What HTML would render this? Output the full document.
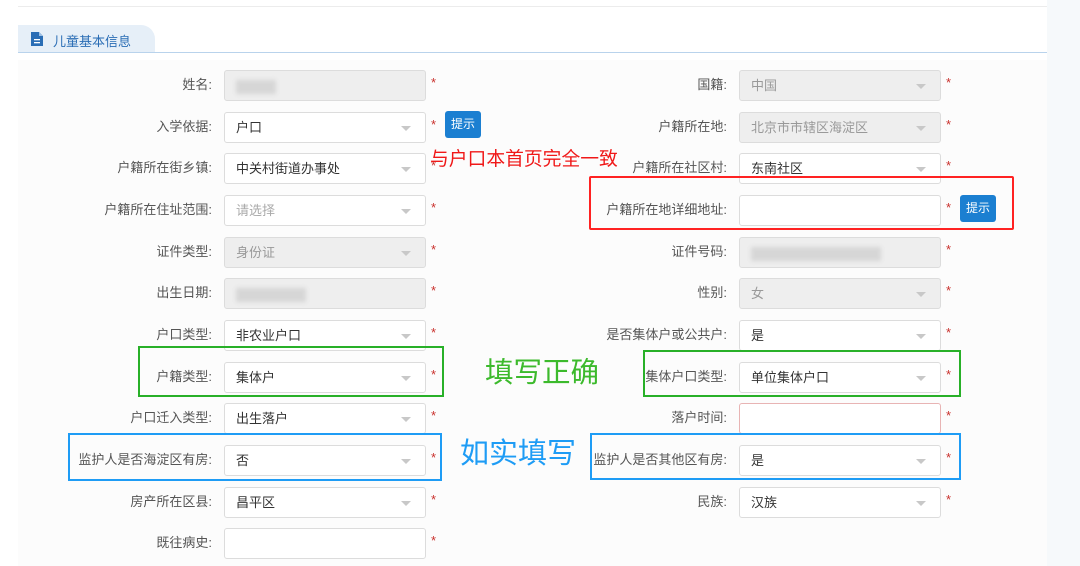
<!DOCTYPE html>
<html><head><meta charset="utf-8"><style>
*{margin:0;padding:0;box-sizing:border-box}
body{width:1080px;height:566px;overflow:hidden;background:#fff;position:relative;font-family:"Liberation Sans","Noto Sans CJK SC",sans-serif;font-size:13px}
.a{position:absolute}
.panel{left:18px;top:60px;width:1029px;height:506px;background:#fcfcfc}
.strip{left:1047px;top:0;width:33px;height:566px;background:#f6f9fb}
.lbl{position:absolute;width:200px;text-align:right;color:#555;font-size:13px;line-height:30px;height:30px}
.box{position:absolute;width:202px;height:31px;border:1px solid #dcdcdc;border-radius:3px;background:#fff;color:#333;padding-left:11px;line-height:29px;font-size:13px}
.box.d{background:#eeeeee;color:#999}
.box.p{color:#aaa}
.box.s::after{content:"";position:absolute;right:14px;top:13px;border-left:5px solid transparent;border-right:5px solid transparent;border-top:5px solid #c8c8c8}
.star{position:absolute;color:#c9302c;font-size:13px;line-height:14px}
.blur{display:inline-block;background:#d6d6d6;height:14px;vertical-align:middle;filter:blur(2px)}
.btn{position:absolute;background:#1b7fd1;color:#fff;border-radius:3px;font-size:12px;text-align:center;line-height:27px;width:36px;height:27px}
.rb{position:absolute;border:2px solid}
</style></head><body>
<div class="a" style="left:18px;top:6px;width:1029px;height:1px;background:#ececec"></div>
<div class="a panel"></div>
<div class="a strip"></div>
<div class="a" style="left:18px;top:25px;width:137px;height:28px;background:#e6eff8;border-radius:0 14px 0 0"></div>
<div class="a" style="left:18px;top:52px;width:1029px;height:1px;background:#b9d3ec"></div>
<svg class="a" style="left:31px;top:32px" width="12" height="14" viewBox="0 0 12 14"><path d="M0 0H8L12 4V14H0Z" fill="#2a6db5"/><path d="M8 0V4H12" fill="#9cc0e6"/><rect x="3" y="7" width="6" height="1.3" fill="#fff"/><rect x="3" y="10" width="6" height="1.3" fill="#fff"/></svg>
<div class="a" style="left:53px;top:31px;color:#2a6db5;font-size:13px">儿童基本信息</div>

<div class="lbl" style="left:12px;top:70px">姓名:</div><div class="box d" style="left:224px;top:70px"><span class="blur" style="width:40px"></span></div><div class="star" style="left:431px;top:76px">*</div>
<div class="lbl" style="left:12px;top:112px">入学依据:</div><div class="box s" style="left:224px;top:112px">户口</div><div class="star" style="left:431px;top:118px">*</div><div class="btn" style="left:445px;top:111px">提示</div>
<div class="lbl" style="left:12px;top:153px">户籍所在街乡镇:</div><div class="box s" style="left:224px;top:153px">中关村街道办事处</div><div class="star" style="left:431px;top:159px">*</div>
<div class="lbl" style="left:12px;top:195px">户籍所在住址范围:</div><div class="box s p" style="left:224px;top:195px">请选择</div><div class="star" style="left:431px;top:201px">*</div>
<div class="lbl" style="left:12px;top:237px">证件类型:</div><div class="box d s" style="left:224px;top:237px">身份证</div><div class="star" style="left:431px;top:243px">*</div>
<div class="lbl" style="left:12px;top:278px">出生日期:</div><div class="box d" style="left:224px;top:278px"><span class="blur" style="width:70px"></span></div><div class="star" style="left:431px;top:284px">*</div>
<div class="lbl" style="left:12px;top:320px">户口类型:</div><div class="box s" style="left:224px;top:320px">非农业户口</div><div class="star" style="left:431px;top:326px">*</div>
<div class="lbl" style="left:12px;top:362px">户籍类型:</div><div class="box s" style="left:224px;top:362px">集体户</div><div class="star" style="left:431px;top:368px">*</div>
<div class="lbl" style="left:12px;top:403px">户口迁入类型:</div><div class="box s" style="left:224px;top:403px">出生落户</div><div class="star" style="left:431px;top:409px">*</div>
<div class="lbl" style="left:12px;top:445px">监护人是否海淀区有房:</div><div class="box s" style="left:224px;top:445px">否</div><div class="star" style="left:431px;top:451px">*</div>
<div class="lbl" style="left:12px;top:487px">房产所在区县:</div><div class="box s" style="left:224px;top:487px">昌平区</div><div class="star" style="left:431px;top:493px">*</div>
<div class="lbl" style="left:12px;top:528px">既往病史:</div><div class="box" style="left:224px;top:528px"></div><div class="star" style="left:431px;top:534px">*</div>

<div class="lbl" style="left:527px;top:70px">国籍:</div><div class="box d s" style="left:739px;top:70px">中国</div><div class="star" style="left:946px;top:76px">*</div>
<div class="lbl" style="left:527px;top:112px">户籍所在地:</div><div class="box d s" style="left:739px;top:112px">北京市市辖区海淀区</div><div class="star" style="left:946px;top:118px">*</div>
<div class="lbl" style="left:527px;top:153px">户籍所在社区村:</div><div class="box s" style="left:739px;top:153px">东南社区</div><div class="star" style="left:946px;top:159px">*</div>
<div class="lbl" style="left:527px;top:195px">户籍所在地详细地址:</div><div class="box" style="left:739px;top:195px"></div><div class="star" style="left:946px;top:201px">*</div><div class="btn" style="left:960px;top:195px">提示</div>
<div class="lbl" style="left:527px;top:237px">证件号码:</div><div class="box d" style="left:739px;top:237px"><span class="blur" style="width:130px"></span></div><div class="star" style="left:946px;top:243px">*</div>
<div class="lbl" style="left:527px;top:278px">性别:</div><div class="box d s" style="left:739px;top:278px">女</div><div class="star" style="left:946px;top:284px">*</div>
<div class="lbl" style="left:527px;top:320px">是否集体户或公共户:</div><div class="box s" style="left:739px;top:320px">是</div><div class="star" style="left:946px;top:326px">*</div>
<div class="lbl" style="left:527px;top:362px">集体户口类型:</div><div class="box s" style="left:739px;top:362px">单位集体户口</div><div class="star" style="left:946px;top:368px">*</div>
<div class="lbl" style="left:527px;top:403px">落户时间:</div><div class="box" style="left:739px;top:403px;border-color:#e8b4b4"></div><div class="star" style="left:946px;top:409px">*</div>
<div class="lbl" style="left:527px;top:445px">监护人是否其他区有房:</div><div class="box s" style="left:739px;top:445px">是</div><div class="star" style="left:946px;top:451px">*</div>
<div class="lbl" style="left:527px;top:487px">民族:</div><div class="box s" style="left:739px;top:487px">汉族</div><div class="star" style="left:946px;top:493px">*</div>

<div class="a" style="left:430px;top:148px;color:#f01818;font-size:18.8px;line-height:22px;white-space:nowrap">与户口本首页完全一致</div>
<div class="rb" style="left:589px;top:176px;width:425px;height:54px;border-color:#f22;border-radius:2px"></div>
<div class="rb" style="left:138px;top:346px;width:306px;height:51px;border-color:#28b028"></div>
<div class="rb" style="left:643px;top:350px;width:318px;height:47px;border-color:#28b028"></div>
<div class="a" style="left:485px;top:355px;color:#3cba2c;font-size:28.5px;line-height:36px;white-space:nowrap">填写正确</div>
<div class="rb" style="left:68px;top:433px;width:374px;height:48px;border-color:#1e9cf5"></div>
<div class="rb" style="left:590px;top:433px;width:371px;height:47px;border-color:#1e9cf5"></div>
<div class="a" style="left:460px;top:436px;color:#1e9cf5;font-size:29px;line-height:36px;white-space:nowrap">如实填写</div>
</body></html>
